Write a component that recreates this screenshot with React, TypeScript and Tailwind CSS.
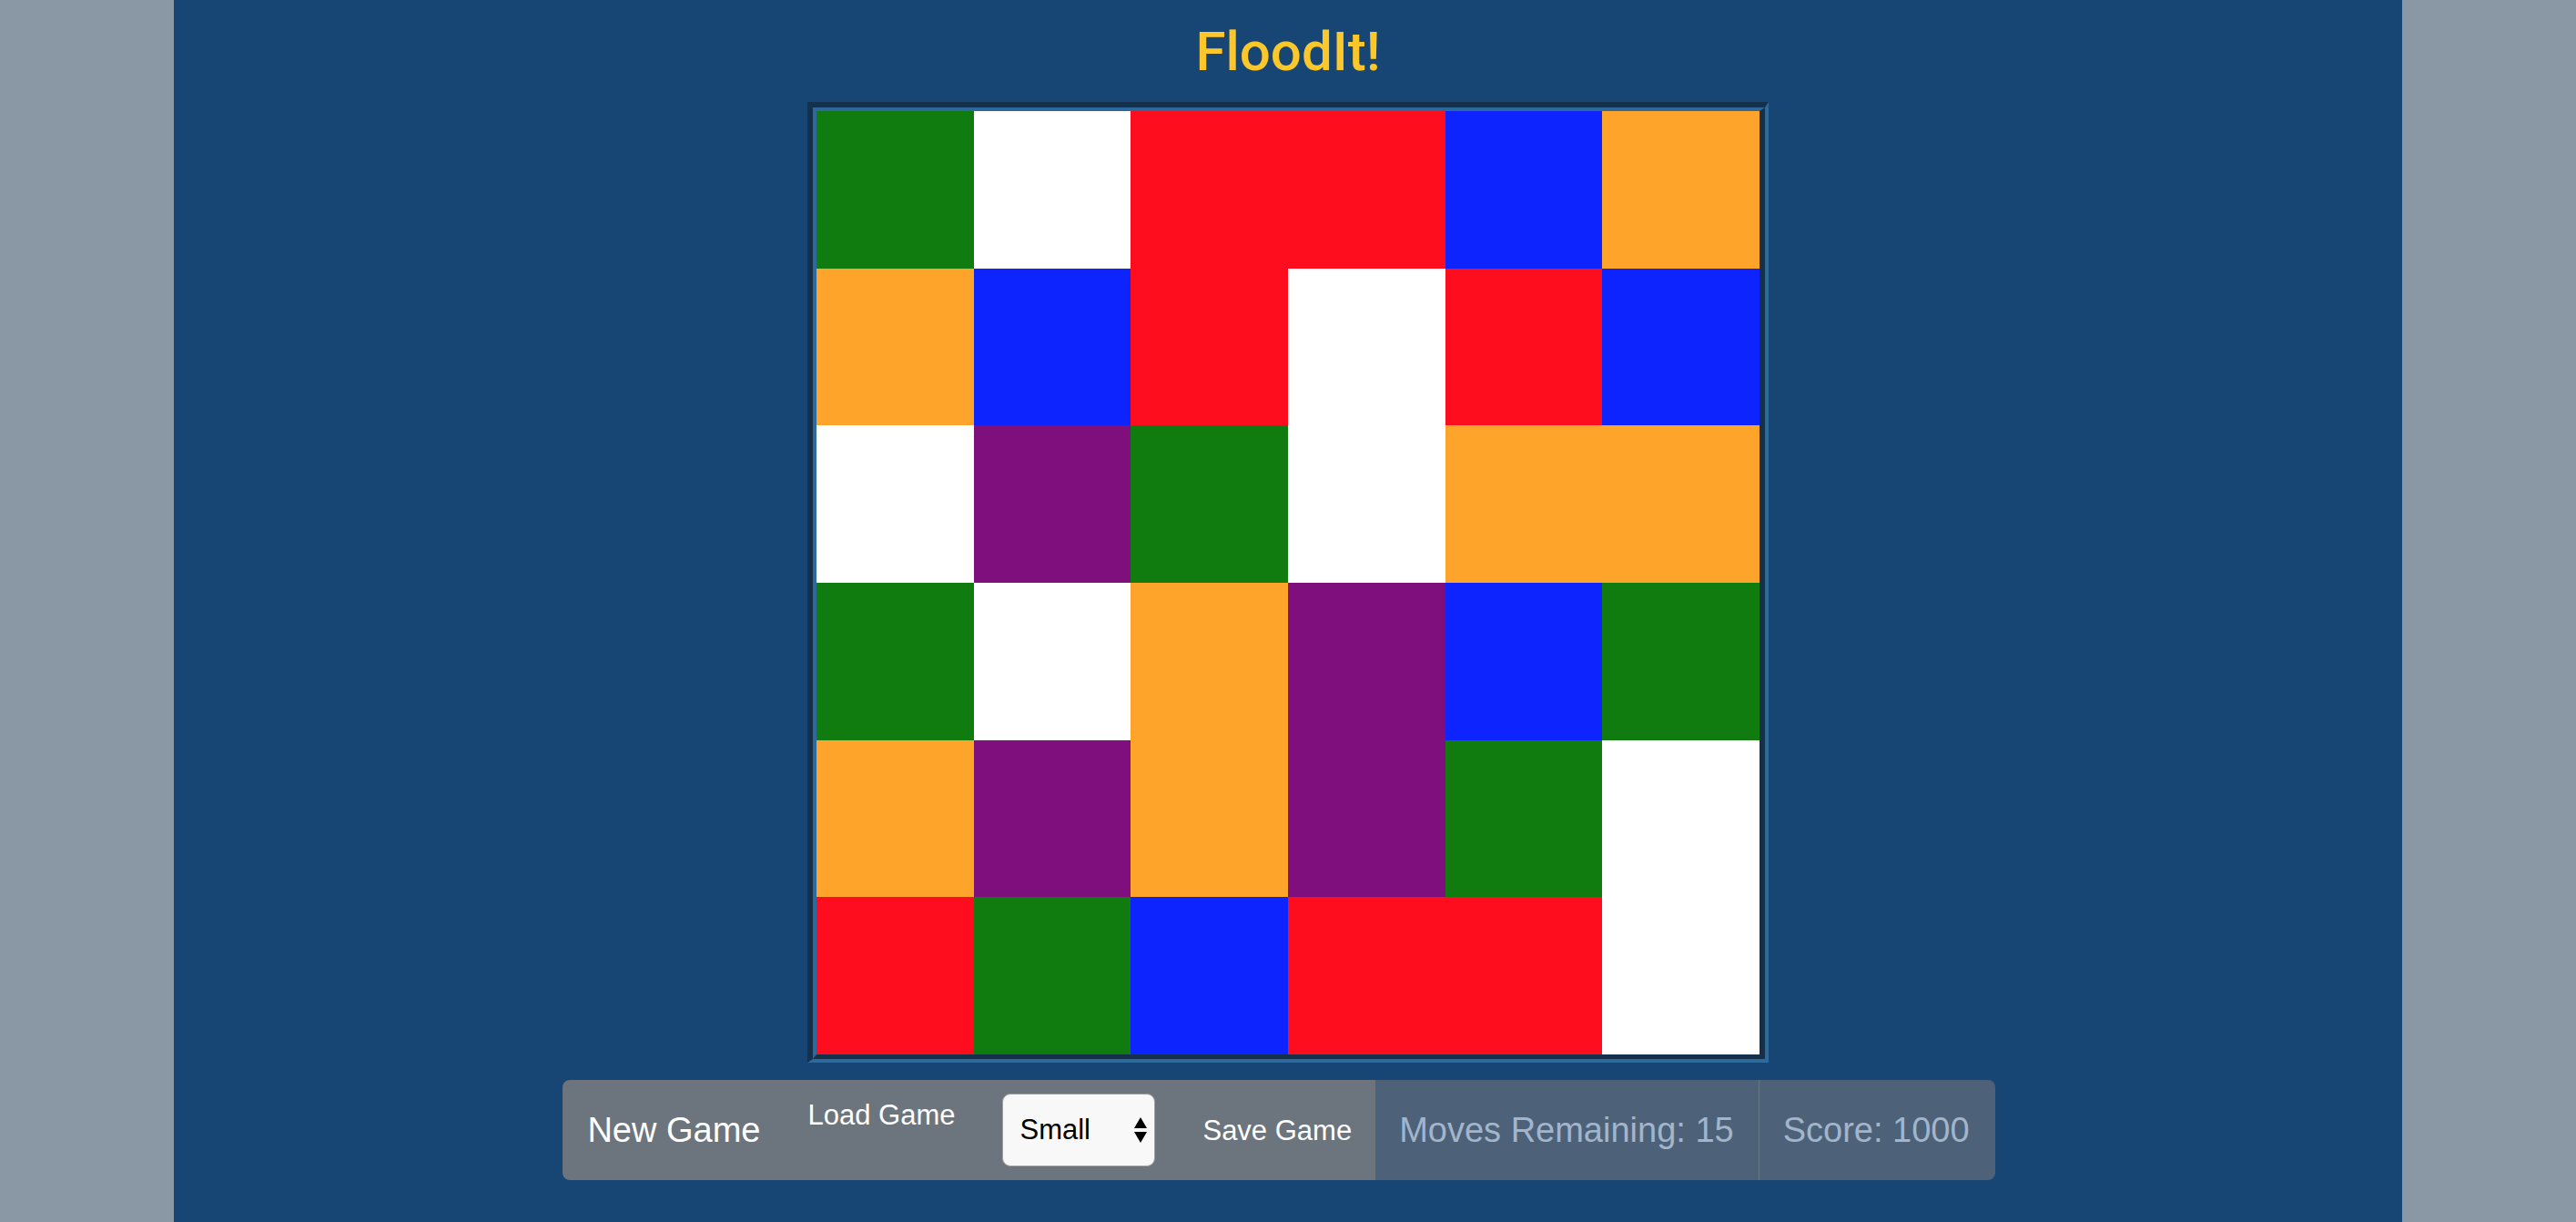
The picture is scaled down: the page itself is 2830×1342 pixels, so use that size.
import React, { useState } from 'react';

const COLORS: Record<string, string> = {
  g: 'bg-[#107c10]',
  w: 'bg-[#ffffff]',
  r: 'bg-[#fe0d1e]',
  b: 'bg-[#0d24fe]',
  o: 'bg-[#fea42a]',
  p: 'bg-[#7f0f7d]',
};

const BOARD = [
  ['g', 'w', 'r', 'r', 'b', 'o'],
  ['o', 'b', 'r', 'w', 'r', 'b'],
  ['w', 'p', 'g', 'w', 'o', 'o'],
  ['g', 'w', 'o', 'p', 'b', 'g'],
  ['o', 'p', 'o', 'p', 'g', 'w'],
  ['r', 'g', 'b', 'r', 'r', 'w'],
];

function Board() {
  return (
    // groove-like frame: outer ring dark top/left, light bottom/right; inner ring reversed
    <div className="border-t-[6px] border-l-[6px] border-r-[4px] border-b-[4px] border-t-[#15304b] border-l-[#15304b] border-r-[#2d6a9b] border-b-[#2d6a9b]">
      <div className="border-t-[4px] border-l-[4px] border-r-[6px] border-b-[5px] border-t-[#2d6a9b] border-l-[#2d6a9b] border-r-[#15304b] border-b-[#15304b]">
        <div className="grid grid-cols-6 grid-rows-6 w-[1036px] h-[1036px]">
          {BOARD.flat().map((c, i) => (
            <div key={i} className={COLORS[c]} />
          ))}
        </div>
      </div>
    </div>
  );
}

function SizeSelect() {
  const [size, setSize] = useState('small');
  return (
    <div className="relative w-[168px] h-[80px]">
      <select
        value={size}
        onChange={(e) => setSize(e.target.value)}
        className="appearance-none w-full h-full rounded-[9px] border border-[#a0a0a0] bg-[#f8f8f8] pl-[18px] text-[31px] text-black outline-none"
      >
        <option value="small">Small</option>
        <option value="medium">Medium</option>
        <option value="large">Large</option>
      </select>
      <svg
        className="absolute right-[9px] top-[26px] pointer-events-none"
        width="14"
        height="28"
        viewBox="0 0 14 28"
      >
        <path d="M7 0 L14 12 L0 12 Z" fill="#000" />
        <path d="M0 16 L14 16 L7 28 Z" fill="#000" />
      </svg>
    </div>
  );
}

export default function App() {
  return (
    <div className="min-h-screen bg-[#8a97a4] font-['Liberation_Sans',Arial,sans-serif]">
      <div className="mx-auto w-[2448px] min-h-screen bg-[#174675] flex flex-col items-center pt-[27px]">
        <h1 className="h-[60px] font-['Roboto','Liberation_Sans',sans-serif] text-[60px] leading-[60px] font-medium text-[#fcc72b]">
          FloodIt!
        </h1>

        <div className="mt-[25px]">
          <Board />
        </div>

        <div className="mt-[19px] w-full flex justify-center pr-[20px]">
          <div className="flex h-[110px] rounded-[8px] overflow-hidden">
            <div className="flex items-center bg-[#6c757d] pl-[27px] pr-[26px] gap-[52px]">
              <button className="text-[38px] leading-[38px] text-white">New Game</button>
              <button className="self-start mt-[23px] text-[31px] leading-[31px] text-white">
                Load Game
              </button>
              <SizeSelect />
              <button className="text-[31px] leading-[31px] text-white">Save Game</button>
            </div>
            <div className="flex items-center bg-[#4d6279] text-[#a3b5ca] text-[38px] leading-[38px]">
              <div className="h-full flex items-center pl-[26px] pr-[27px]">Moves Remaining: 15</div>
              <div className="h-full flex items-center border-l border-[#66778a] pl-[26px] pr-[28px]">
                Score: 1000
              </div>
            </div>
          </div>
        </div>
      </div>
    </div>
  );
}
